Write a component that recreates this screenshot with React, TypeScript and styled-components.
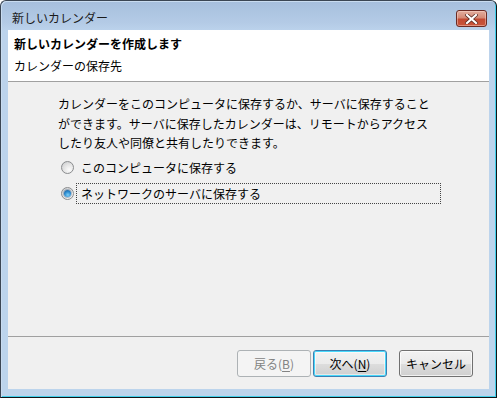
import React from 'react';
import styled, { createGlobalStyle } from 'styled-components';

const GlobalStyle = createGlobalStyle`
  html, body {
    margin: 0;
    padding: 0;
  }
  body {
    width: 497px;
    height: 398px;
    overflow: hidden;
    background: #ffffff;
    font-family: 'Noto Sans CJK JP', 'Meiryo UI', sans-serif;
    font-size: 12px;
    color: #000000;
  }
`;

const Window = styled.div`
  width: 497px;
  height: 398px;
  box-sizing: border-box;
  display: flex;
  flex-direction: column;
  border: 1px solid #3b4654;
  border-bottom-color: #101418;
  border-right-color: #101418;
  border-radius: 6px 6px 0 0;
  background: linear-gradient(#a6bfdd 0px, #b4cbe6 22px, #bcd3ec 30px, #bcd4ec 100%);
  box-shadow: inset 1px 1px 0 #c9dcf0, inset -1px -1px 0 #41cfea;
`;

const TitleBar = styled.div`
  height: 29px;
  flex: none;
  box-sizing: border-box;
  display: flex;
  align-items: flex-start;
  justify-content: space-between;
  padding: 9px 9px 0 11px;
`;

const TitleText = styled.div`
  line-height: 16px;
  color: #1a1a1a;
`;

const CloseButton = styled.div`
  width: 31px;
  height: 17px;
  box-sizing: border-box;
  border: 1px solid #6b2b24;
  border-radius: 3px;
  background: linear-gradient(#e2ae9f 0%, #d58a76 45%, #c24a33 55%, #c9553b 100%);
  box-shadow: inset 0 0 0 1px rgba(255, 220, 210, 0.45);
  display: flex;
  align-items: center;
  justify-content: center;
`;

const Client = styled.div`
  flex: 1;
  margin: 0 7px 8px 7px;
  display: flex;
  flex-direction: column;
  background: #f0f0f0;
`;

const Header = styled.div`
  height: 52px;
  flex: none;
  box-sizing: border-box;
  background: #ffffff;
  border-bottom: 1px solid #a0a0a0;
  padding: 6px 6px 0 6px;
  display: flex;
  flex-direction: column;
  gap: 6px;
`;

const HeaderTitle = styled.div`
  font-weight: bold;
  line-height: 16px;
`;

const HeaderSub = styled.div`
  line-height: 16px;
`;

const Body = styled.div`
  flex: 1;
  padding: 12px 0 0 50px;
  display: flex;
  flex-direction: column;
`;

const Paragraph = styled.div`
  width: 376px;
  line-height: 19.5px;
  margin-bottom: 4px;
`;

const RadioRow = styled.div<{ $gap?: number }>`
  display: flex;
  align-items: center;
  height: 21px;
  padding-left: 3px;
  gap: 2px;
  margin-top: ${(p) => p.$gap ?? 0}px;
`;

const RadioCircle = styled.div<{ $checked?: boolean }>`
  width: 13px;
  height: 13px;
  box-sizing: border-box;
  border-radius: 50%;
  border: 1px solid #8a8c8e;
  background: radial-gradient(circle at 65% 70%, #fbfbfb 0%, #e4e4e4 50%, #c4c6c8 100%);
  display: flex;
  align-items: center;
  justify-content: center;

  &::after {
    content: '';
    display: ${(p) => (p.$checked ? 'block' : 'none')};
    width: 7px;
    height: 7px;
    border-radius: 50%;
    background: radial-gradient(circle at 55% 70%, #7fd0f6 0%, #2a8ad0 50%, #1a4f86 100%);
    box-shadow: 0 0 0 1px rgba(40, 80, 120, 0.35);
  }
`;

const RadioLabel = styled.div<{ $focused?: boolean }>`
  width: 365px;
  height: 21px;
  box-sizing: border-box;
  padding-left: 4px;
  line-height: 19px;
  border: 1px dotted ${(p) => (p.$focused ? '#444444' : 'transparent')};
`;

const Footer = styled.div`
  height: 53px;
  flex: none;
  box-sizing: border-box;
  border-top: 1px solid #a0a0a0;
  padding: 13px 16px 0 0;
  display: flex;
  justify-content: flex-end;
  align-items: flex-start;
`;

const Button = styled.div<{ $variant?: 'default' | 'disabled'; $gap?: number }>`
  width: 74px;
  height: 27px;
  box-sizing: border-box;
  margin-left: ${(p) => p.$gap ?? 0}px;
  border-radius: 3px;
  display: flex;
  align-items: center;
  justify-content: center;
  line-height: 16px;
  border: 1px solid
    ${(p) => (p.$variant === 'disabled' ? '#adb2b5' : p.$variant === 'default' ? '#3c7fb1' : '#707070')};
  color: ${(p) => (p.$variant === 'disabled' ? '#838383' : '#000000')};
  background: ${(p) =>
    p.$variant === 'disabled'
      ? '#f4f4f4'
      : 'linear-gradient(#f2f2f2 0%, #ebebeb 50%, #dddddd 51%, #cfcfcf 100%)'};
  box-shadow: ${(p) =>
    p.$variant === 'default'
      ? 'inset 0 0 0 1px #48d8fb, inset 0 0 0 2px rgba(255,255,255,0.5)'
      : p.$variant === 'disabled'
      ? 'none'
      : 'inset 0 0 0 1px rgba(255,255,255,0.7)'};

  u {
    text-decoration: underline;
    text-underline-offset: 2px;
  }
`;

function CloseGlyph() {
  return (
    <svg width="13" height="10" viewBox="0 0 13 10">
      <path
        d="M2 1 L11 9 M11 1 L2 9"
        stroke="#5a2a22"
        strokeWidth="3.6"
        strokeLinecap="square"
        fill="none"
      />
      <path
        d="M2 1 L11 9 M11 1 L2 9"
        stroke="#ffffff"
        strokeWidth="2.2"
        strokeLinecap="square"
        fill="none"
      />
    </svg>
  );
}

export default function App() {
  return (
    <>
      <GlobalStyle />
      <Window>
        <TitleBar>
          <TitleText>新しいカレンダー</TitleText>
          <CloseButton>
            <CloseGlyph />
          </CloseButton>
        </TitleBar>
        <Client>
          <Header>
            <HeaderTitle>新しいカレンダーを作成します</HeaderTitle>
            <HeaderSub>カレンダーの保存先</HeaderSub>
          </Header>
          <Body>
            <Paragraph>
              カレンダーをこのコンピュータに保存するか、サーバに保存することができます。サーバに保存したカレンダーは、リモートからアクセスしたり友人や同僚と共有したりできます。
            </Paragraph>
            <RadioRow>
              <RadioCircle />
              <RadioLabel>このコンピュータに保存する</RadioLabel>
            </RadioRow>
            <RadioRow $gap={5}>
              <RadioCircle $checked />
              <RadioLabel $focused>ネットワークのサーバに保存する</RadioLabel>
            </RadioRow>
          </Body>
          <Footer>
            <Button $variant="disabled">
              戻る(<u>B</u>)
            </Button>
            <Button $variant="default" $gap={2}>
              次へ(<u>N</u>)
            </Button>
            <Button $gap={12}>キャンセル</Button>
          </Footer>
        </Client>
      </Window>
    </>
  );
}
